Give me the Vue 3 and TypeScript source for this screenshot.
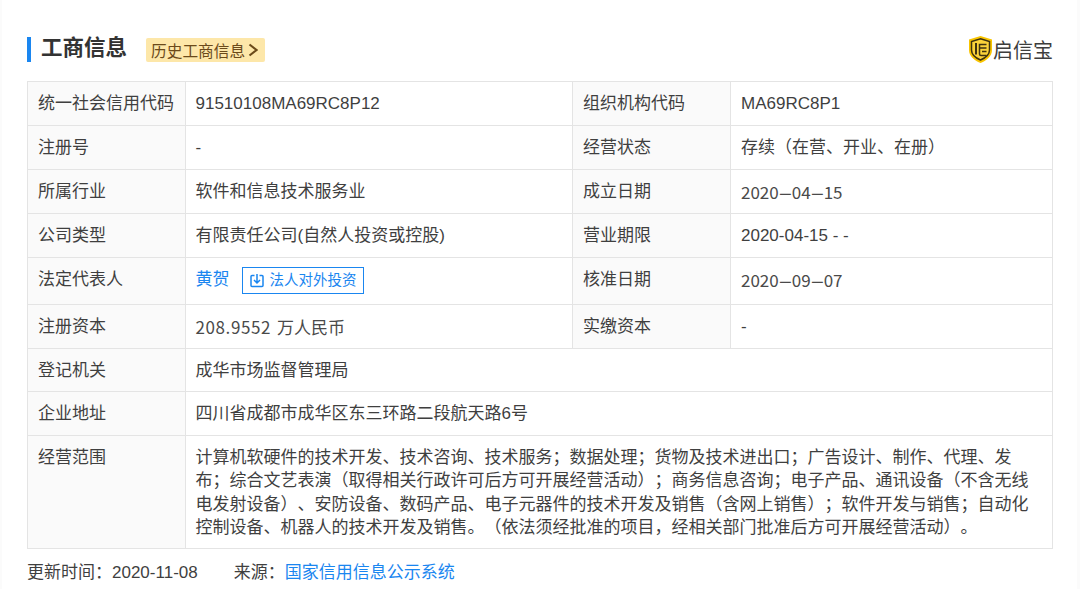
<script setup lang="ts">
interface Row {
  label: string
  value: string
  label2?: string
  value2?: string
  kind?: 'person' | 'short' | 'scope' | 'capital'
  date?: boolean
}
const rows: Row[] = [
  { label: '统一社会信用代码', value: '91510108MA69RC8P12', label2: '组织机构代码', value2: 'MA69RC8P1' },
  { label: '注册号', value: '-', label2: '经营状态', value2: '存续（在营、开业、在册）' },
  { label: '所属行业', value: '软件和信息技术服务业', label2: '成立日期', value2: '2020-04-15', date: true },
  { label: '公司类型', value: '有限责任公司(自然人投资或控股)', label2: '营业期限', value2: '2020-04-15 - -' },
  { label: '法定代表人', value: '黄贺', label2: '核准日期', value2: '2020-09-07', kind: 'person', date: true },
  { label: '注册资本', value: '208.9552', label2: '实缴资本', value2: '-', kind: 'capital' },
  { label: '登记机关', value: '成华市场监督管理局', kind: 'short' },
  { label: '企业地址', value: '四川省成都市成华区东三环路二段航天路6号' },
  { label: '经营范围', value: '计算机软硬件的技术开发、技术咨询、技术服务；数据处理；货物及技术进出口；广告设计、制作、代理、发布；综合文艺表演（取得相关行政许可后方可开展经营活动）；商务信息咨询；电子产品、通讯设备（不含无线电发射设备）、安防设备、数码产品、电子元器件的技术开发及销售（含网上销售）；软件开发与销售；自动化控制设备、机器人的技术开发及销售。（依法须经批准的项目，经相关部门批准后方可开展经营活动）。', kind: 'scope' },
]
</script>

<template>
  <main class="page">
    <header class="head">
      <div class="title-wrap">
        <h1 class="title">工商信息</h1>
        <span class="history">历史工商信息<svg class="chev" viewBox="0 0 10 14" width="10" height="14"><path d="M1.500 1.500 8.500 7l-7 5.500" fill="none" stroke="#6b4a1a" stroke-width="2.200"/></svg></span>
      </div>
      <div class="brand">
        <svg viewBox="0 0 23 27" width="23" height="27">
          <path d="M11.500 0 23 3.500V14c0 6-5 10.500-11.500 13C5 24.500 0 20 0 14V3.500Z" fill="#f8c400"/>
          <path d="M11.500 2.800 20.500 5.500V14c0 4.500-3.800 7.800-9 10-5.200-2.200-9-5.500-9-10V5.500Z" fill="#fbd23a" stroke="#3f3210" stroke-width="1.500"/>
          <path d="M7 7v11.500" fill="none" stroke="#3f3210" stroke-width="2"/>
          <path d="M17.500 8.500h-7v9.500c0 1 .7 1.500 1.500 1.500h5.500M10.500 12h7M13 15.500h4.500" fill="none" stroke="#3f3210" stroke-width="1.500"/>
        </svg>
        <span>启信宝</span>
      </div>
    </header>

    <table class="info">
      <colgroup>
        <col class="c1" /><col class="c2" /><col class="c3" /><col class="c4" />
      </colgroup>
      <tbody>
        <tr v-for="r in rows" :key="r.label" :class="r.kind">
          <th>{{ r.label }}</th>
          <td class="first" :colspan="r.label2 ? 1 : 3">
            <div v-if="r.kind === 'person'" class="person-line">
              <a class="link name">{{ r.value }}</a>
              <span class="invest">
                <svg viewBox="0 0 16 16" width="16" height="16"><path d="M5.500 2.500H3a1 1 0 0 0-1 1v9a1 1 0 0 0 1 1h10a1 1 0 0 0 1-1v-9a1 1 0 0 0-1-1h-2.500M8 1v8.500M5 7l3 3 3-3" fill="none" stroke="#1a86f0" stroke-width="1.500"/></svg>
                法人对外投资
              </span>
            </div>
            <span v-else-if="r.kind === 'capital'" class="soft"><span class="num">{{ r.value }}</span> 万人民币</span>
            <template v-else>{{ r.value }}</template>
          </td>
          <template v-if="r.label2">
            <th>{{ r.label2 }}</th>
            <td>
              <span v-if="r.date" class="soft">
                <template v-for="(part, i) in (r.value2 ?? '').split('-')" :key="i">
                  <span v-if="i > 0" class="dash">-</span>{{ part }}
                </template>
              </span>
              <template v-else>{{ r.value2 }}</template>
            </td>
          </template>
        </tr>
      </tbody>
    </table>

    <footer class="foot">
      <span>更新时间：2020-11-08</span>
      <span>来源：<a class="link">国家信用信息公示系统</a></span>
    </footer>
  </main>
</template>

<style>
html, body { margin: 0; background: #fff; }
</style>

<style scoped>
.page {
  width: 1080px;
  height: 589px;
  box-sizing: border-box;
  padding: 33px 27px 0;
  overflow: hidden;
  font-family: "Liberation Sans", "Noto Sans CJK SC", sans-serif;
  font-size: 17px;
  color: #3f3f3f;
  text-spacing-trim: space-all;
  box-shadow: inset 2px 0 #fbfbfb, inset -3px 0 #fbfbfb;
}
.head {
  display: flex;
  justify-content: space-between;
  align-items: center;
  height: 32px;
  margin-bottom: 16px;
}
.title-wrap { display: flex; align-items: center; }
.title {
  margin: 0;
  border-left: 4px solid #1a86f0;
  padding: 0 0 2px 10px;
  font-size: 21.500px;
  line-height: 23px;
  font-weight: 700;
  color: #333;
}
.history {
  display: flex;
  align-items: center;
  gap: 3px;
  margin: 2px 0 0 19px;
  padding: 0 7px 0 5px;
  height: 24px;
  border-radius: 2px;
  background: #fde7a9;
  color: #6b4a1a;
  font-size: 15.700px;
}
.brand {
  display: flex;
  align-items: center;
  gap: 1px;
  font-size: 20px;
  color: #3d3d3d;
}
.info {
  width: 1026px;
  table-layout: fixed;
  border-collapse: collapse;
}
.c1 { width: 158px; }
.c2 { width: 387px; }
.c3 { width: 158px; }
th, td {
  border: 1px solid #e4e4e4;
  height: 43px;
  padding: 9px 10px;
  box-sizing: border-box;
  line-height: 25px;
  vertical-align: top;
  text-align: left;
  font-weight: 400;
}
td.first { padding-left: 9.500px; }
th { background: #fafafa; }
.person th, .person td { height: 47px; }
.short th, .short td { padding-bottom: 8px; }
.scope td { padding-top: 10px; padding-bottom: 8.500px; line-height: 23.400px; }
.person-line { display: flex; align-items: center; gap: 12px; height: 27px; }
.name { margin-top: -2px; }
.soft {
  display: block;
  height: 25px;
  white-space: nowrap;
  font-family: "Noto Sans CJK SC", sans-serif;
  color: #4a4a4a;
}
.num { letter-spacing: 0.600px; margin-right: 2px; }
.dash {
  display: inline-block;
  width: 13px;
  text-align: center;
  transform: scaleX(2.500);
}
.link { color: #1a86f0; }
.invest {
  display: flex;
  align-items: center;
  gap: 5px;
  height: 27px;
  box-sizing: border-box;
  padding: 0 6px;
  border: 1px solid #1a86f0;
  color: #1a86f0;
  font-size: 14.500px;
}
.foot {
  display: flex;
  gap: 36px;
  margin-top: 11px;
  line-height: 25px;
}
</style>
